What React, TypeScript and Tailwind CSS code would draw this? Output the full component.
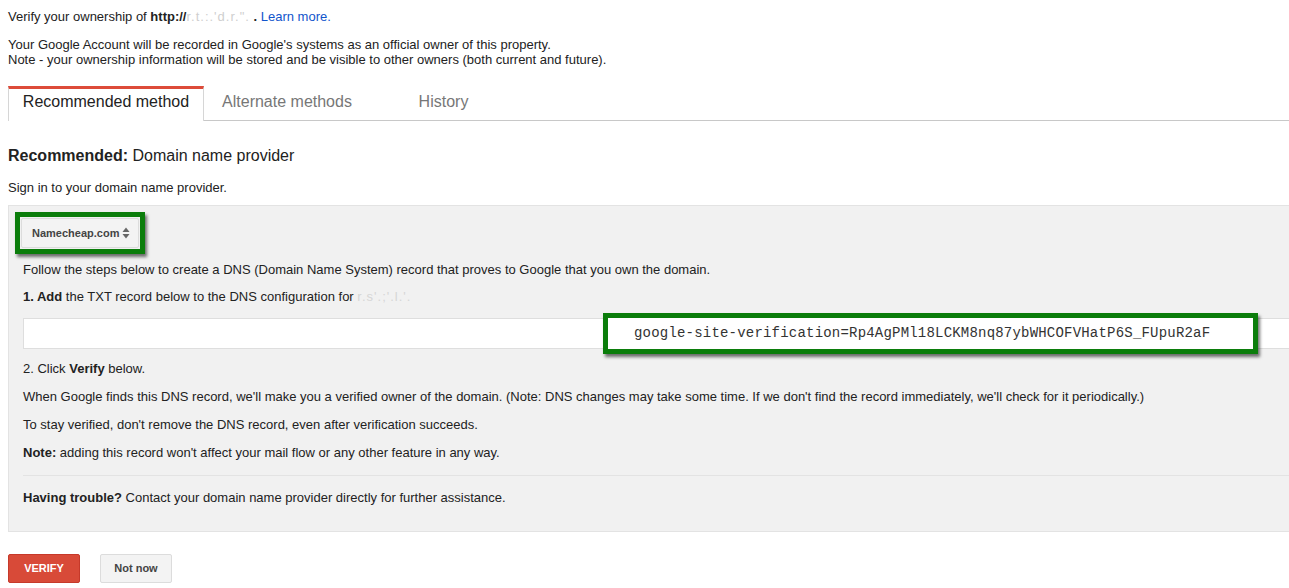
export default function App() {
  const annot = 'border-[5px] border-[#0b7d0b] shadow-[2px_3px_3px_rgba(0,0,0,0.55)]';

  return (
    <div className="min-h-screen w-full overflow-hidden bg-white text-[13px] leading-[15px] text-[#222]" style={{ fontFamily: '"Liberation Sans", Arial, sans-serif' }}>
      <div className="pl-2 pt-[9px]">
        <p>
          Verify your ownership of <b>http://</b>
          <span className="text-[#cfcfcf] tracking-[1px]">r.t.:.'d.r.".</span>
          <b> . </b>
          <a className="text-[#15c]">Learn more.</a>
        </p>
        <p className="mt-[13px]">Your Google Account will be recorded in Google's systems as an official owner of this property.</p>
        <p>Note - your ownership information will be stored and be visible to other owners (both current and future).</p>
      </div>

      {/* tabs */}
      <div className="mt-[19px] flex pl-2">
        <div className="flex h-[35px] w-[196px] justify-center border-x border-t-[3px] border-x-[#d6d6d6] border-t-[#dd4b39] bg-white pt-[4px] text-[16px] leading-[18px] text-[#222]">
          Recommended method
        </div>
        <div className="flex flex-1 border-b border-[#c8c8c8] text-[16px] leading-[18px] text-[#777]">
          <div className="flex w-[166px] justify-center pt-[7px]">Alternate methods</div>
          <div className="flex w-[147px] justify-center pt-[7px]">History</div>
        </div>
      </div>

      <div className="pl-2">
        <h2 className="mt-[26px] text-[16px] leading-[18px] text-[#222]">
          <b>Recommended:</b> Domain name provider
        </h2>
        <p className="mt-[15px]">Sign in to your domain name provider.</p>

        {/* panel */}
        <div className="mt-[10px] border-l border-t border-b border-[#e3e3e3] bg-[#f1f1f1] pl-[14px] pt-[6px] pb-[26px]">
          <div className={`-ml-2 inline-flex p-px ${annot}`}>
            <div className="flex h-[30px] w-[118px] items-center justify-between rounded-[2px] border border-[#dcdcdc] bg-[#f3f3f3] pl-[10px] pr-[8px] text-[11px] font-bold text-[#444]">
              <span>Namecheap.com</span>
              <svg width="8" height="12" viewBox="0 0 8 12">
                <path d="M4 0.5 L7.5 5 L0.5 5 Z" fill="#666" />
                <path d="M4 11.5 L7.5 7 L0.5 7 Z" fill="#666" />
              </svg>
            </div>
          </div>

          <p className="mt-[8px]">Follow the steps below to create a DNS (Domain Name System) record that proves to Google that you own the domain.</p>
          <p className="mt-[12px]">
            <b>1. Add</b> the TXT record below to the DNS configuration for{' '}
            <span className="text-[#d6d6d6] tracking-[1px]">r.s'.;'.l.'.</span>
          </p>

          <div className="mt-[14px] flex h-[31px] items-center border-y border-l border-[#dedede] bg-white">
            <div className={`ml-[579px] flex h-[41px] w-[655px] shrink-0 items-center bg-white pl-[26px] ${annot}`}>
              <span className="text-[14px] tracking-[0.2px] text-[#333]" style={{ fontFamily: '"Liberation Mono", "Courier New", monospace' }}>
                google-site-verification=Rp4AgPMl18LCKM8nq87ybWHCOFVHatP6S_FUpuR2aF
              </span>
            </div>
          </div>

          <p className="mt-[12px]">2. Click <b>Verify</b> below.</p>
          <p className="mt-[13px]">When Google finds this DNS record, we'll make you a verified owner of the domain. (Note: DNS changes may take some time. If we don't find the record immediately, we'll check for it periodically.)</p>
          <p className="mt-[13px]">To stay verified, don't remove the DNS record, even after verification succeeds.</p>
          <p className="mt-[13px]"><b>Note:</b> adding this record won't affect your mail flow or any other feature in any way.</p>

          <div className="mt-[15px] border-t border-[#e3e3e3]" />
          <p className="mt-[14px]"><b>Having trouble?</b> Contact your domain name provider directly for further assistance.</p>
        </div>

        {/* buttons */}
        <div className="mt-[22px] flex gap-5">
          <button className="h-[29px] w-[72px] rounded-[2px] border border-[#c6392a] bg-[#d84a38] text-[11px] font-bold text-white">VERIFY</button>
          <button className="h-[29px] w-[72px] rounded-[2px] border border-[#dcdcdc] bg-[#f3f3f3] text-[11px] font-bold text-[#444]">Not now</button>
        </div>
      </div>
    </div>
  );
}
